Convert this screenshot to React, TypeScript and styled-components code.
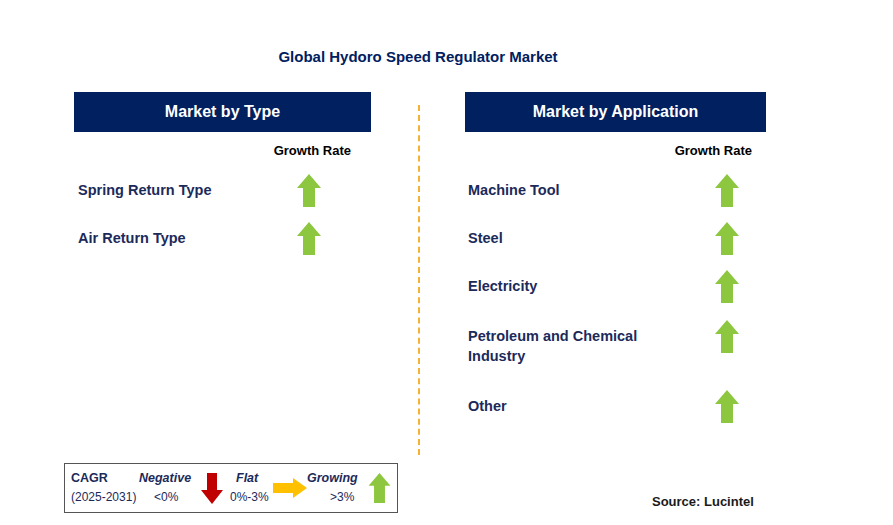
import styled, { createGlobalStyle } from 'styled-components';

const Global = createGlobalStyle`
  body { margin: 0; background: #fff; font-family: 'Liberation Sans', Arial, sans-serif; }
`;

const NAVY = '#1c2a5a';

const Page = styled.div`
  width: 893px;
  height: 525px;
  display: flex;
  flex-direction: column;
  color: ${NAVY};
`;

const Title = styled.div`
  margin-top: 47px;
  height: 20px;
  line-height: 20px;
  text-align: center;
  font-size: 15px;
  font-weight: bold;
  color: #002060;
  padding-left: 0;
  width: 836px;
`;

const Main = styled.div`
  margin-top: 25px;
  height: 363px;
  display: flex;
  padding-left: 74px;
`;

const Panel = styled.div`
  width: ${(p: { $w: number }) => p.$w}px;
  display: flex;
  flex-direction: column;
`;

const Header = styled.div`
  height: 40px;
  background: #002060;
  color: #fff;
  font-weight: bold;
  font-size: 16px;
  display: flex;
  align-items: center;
  justify-content: center;
`;

const GrowthHead = styled.div<{ $pr: number }>`
  margin-top: 9px;
  height: 20px;
  line-height: 20px;
  font-size: 13px;
  font-weight: bold;
  color: #000;
  text-align: right;
  padding-right: ${(p) => p.$pr}px;
  margin-bottom: 5px;
`;

const Row = styled.div<{ $h?: number }>`
  height: ${(p) => p.$h ?? 48}px;
  display: flex;
  align-items: center;
`;

const Label = styled.div<{ $w: number; $pl: number }>`
  width: ${(p) => p.$w}px;
  padding-left: ${(p) => p.$pl}px;
  box-sizing: border-box;
  font-size: 14.5px;
  font-weight: bold;
  line-height: 20px;
  color: ${NAVY};
`;

const ArrowSlot = styled.div<{ $top?: boolean }>`
  display: flex;
  align-self: ${(p) => (p.$top ? 'flex-start' : 'center')};
  margin-top: ${(p) => (p.$top ? 10 : 0)}px;
`;

const Divider = styled.div`
  width: 0;
  margin: 13px 45px 0 47px;
  border-left: 2px dashed #f5b335;
`;

const Footer = styled.div`
  margin-top: 8px;
  display: flex;
  align-items: flex-end;
  padding-left: 64px;
`;

const Legend = styled.div`
  width: 334px;
  height: 50px;
  box-sizing: border-box;
  border: 1px solid #555;
  display: flex;
  align-items: center;
  padding-left: 6px;
  font-size: 12px;
  color: ${NAVY};
`;

const LegendCol = styled.div<{ $w: number; $pl?: number }>`
  width: ${(p) => p.$w}px;
  padding-left: ${(p) => p.$pl ?? 0}px;
  box-sizing: border-box;
  display: flex;
  flex-direction: column;
  gap: 4px;
  line-height: 15px;
`;

const Strong = styled.span<{ $italic?: boolean }>`
  font-weight: bold;
  font-style: ${(p) => (p.$italic ? 'italic' : 'normal')};
  font-size: 12.5px;
`;

const Small = styled.span<{ $pl?: number }>`
  padding-left: ${(p) => p.$pl ?? 0}px;
`;

const Source = styled.div`
  margin-left: 254px;
  margin-bottom: 4px;
  font-size: 13px;
  font-weight: bold;
  color: #1a1a1a;
`;

const Up = ({ w = 24, h = 33 }: { w?: number; h?: number }) => (
  <svg width={w} height={h} viewBox="0 0 24 33">
    <polygon points="12,0 24,14 18,14 18,33 6,33 6,14 0,14" fill="#8dc63f" />
  </svg>
);

const Down = () => (
  <svg width="22" height="31" viewBox="0 0 22 31">
    <polygon points="6,0 16,0 16,17 22,17 11,31 0,17 6,17" fill="#c00000" />
  </svg>
);

const Right = () => (
  <svg width="34" height="20" viewBox="0 0 34 20">
    <polygon points="0,5 20,5 20,0 34,10 20,20 20,15 0,15" fill="#ffc000" />
  </svg>
);

const typeRows = ['Spring Return Type', 'Air Return Type'];
const appRows: { label: string; h?: number; top?: boolean }[] = [
  { label: 'Machine Tool' },
  { label: 'Steel' },
  { label: 'Electricity' },
  { label: 'Petroleum and Chemical Industry', h: 72, top: true },
  { label: 'Other' },
];

export default function App() {
  return (
    <Page>
      <Global />
      <Title>Global Hydoro Speed Regulator Market</Title>
      <Main>
        <Panel $w={297}>
          <Header>Market by Type</Header>
          <GrowthHead $pr={20}>Growth Rate</GrowthHead>
          {typeRows.map((r) => (
            <Row key={r}>
              <Label $w={223} $pl={4}>{r}</Label>
              <ArrowSlot><Up /></ArrowSlot>
            </Row>
          ))}
        </Panel>
        <Divider />
        <Panel $w={301}>
          <Header>Market by Application</Header>
          <GrowthHead $pr={14}>Growth Rate</GrowthHead>
          {appRows.map((r) => (
            <Row key={r.label} $h={r.h}>
              <Label $w={250} $pl={3} style={r.top ? { maxWidth: 190 } : undefined}>{r.label}</Label>
              {r.top && <div style={{ width: 60 }} />}
              <ArrowSlot $top={r.top}><Up /></ArrowSlot>
            </Row>
          ))}
        </Panel>
      </Main>
      <Footer>
        <Legend>
          <LegendCol $w={66}>
            <Strong>CAGR</Strong>
            <Small>(2025-2031)</Small>
          </LegendCol>
          <LegendCol $w={64} $pl={2}>
            <Strong $italic>Negative</Strong>
            <Small $pl={15}>&lt;0%</Small>
          </LegendCol>
          <Down />
          <LegendCol $w={50} $pl={7}>
            <Strong $italic style={{ paddingLeft: 6 }}>Flat</Strong>
            <Small>0%-3%</Small>
          </LegendCol>
          <Right />
          <LegendCol $w={61}>
            <Strong $italic>Growing</Strong>
            <Small $pl={23}>&gt;3%</Small>
          </LegendCol>
          <Up w={23} h={30} />
        </Legend>
        <Source>Source: Lucintel</Source>
      </Footer>
    </Page>
  );
}
